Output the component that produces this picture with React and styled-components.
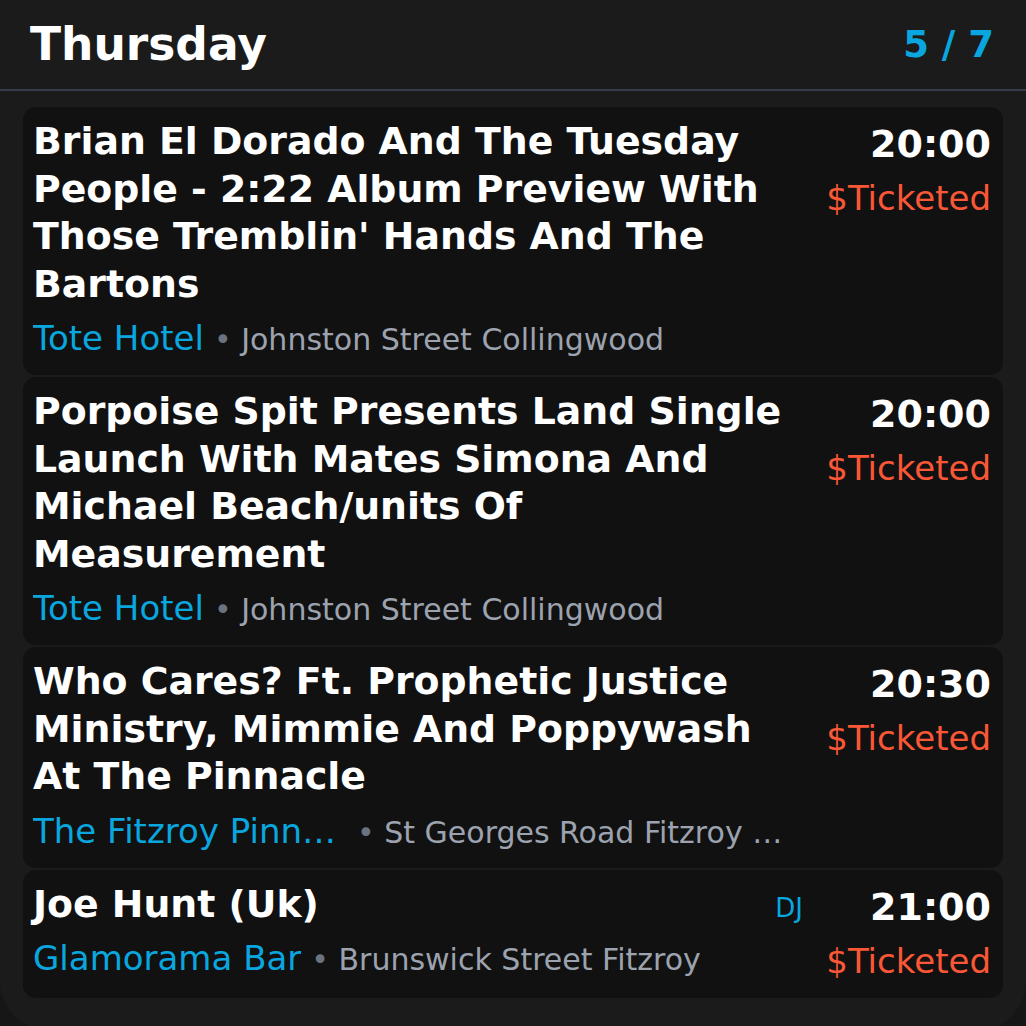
import React from "react"
import styled, { createGlobalStyle } from "styled-components"

const GlobalStyle = createGlobalStyle`
  html, body {
    margin: 0;
    padding: 0;
    background: #161616;
    overflow: hidden;
  }
  body {
    font-family: "DejaVu Sans", "Liberation Sans", sans-serif;
    color: #ffffff;
  }
`

const Panel = styled.div`
  background: #1b1b1b;
  height: 1030px;
  border-radius: 0 0 48px 48px;
`

const Header = styled.header`
  display: flex;
  align-items: center;
  justify-content: space-between;
  height: 89px;
  padding: 0 32px 0 30px;
  border-bottom: 2px solid #363c48;
`

const Day = styled.h1`
  margin: 0;
  font-size: 45.5px;
  font-weight: 700;
  color: #ffffff;
`

const Counter = styled.div`
  font-size: 37px;
  font-weight: 700;
  color: #0aa6df;
`

const List = styled.div`
  display: flex;
  flex-direction: column;
  gap: 2px;
  padding: 16px 23px;
`

const Card = styled.div`
  display: flex;
  gap: 14px;
  padding: 11px 12px 15px 10px;
  background: #111111;
  border-radius: 13px;
`

const Main = styled.div`
  flex: 1;
  min-width: 0;
`

const TitleRow = styled.div`
  display: flex;
  align-items: baseline;
  justify-content: space-between;
  gap: 16px;
`

const Title = styled.div`
  font-size: 37.8px;
  font-weight: 700;
  line-height: 47.5px;
  color: #ffffff;
`

const Tag = styled.span`
  font-size: 26px;
  line-height: 30px;
  color: #0aa6df;
  flex-shrink: 0;
`

const VenueLine = styled.div`
  display: flex;
  align-items: baseline;
  height: 44px;
  margin-top: 8px;
  line-height: 44px;
  white-space: nowrap;
`

const Venue = styled.span`
  max-width: 314px;
  overflow: hidden;
  text-overflow: ellipsis;
  font-size: 34px;
  color: #0aa6df;
  flex-shrink: 0;
`

const Address = styled.span`
  flex: 1;
  min-width: 0;
  margin-left: 10px;
  overflow: hidden;
  text-overflow: ellipsis;
  font-size: 30px;
  color: #9ca3af;
`

const Dot = styled.span`
  color: #6b7280;
`

const Side = styled.div`
  width: 174px;
  flex-shrink: 0;
  text-align: right;
`

const Time = styled.div`
  font-size: 38px;
  font-weight: 700;
  line-height: 52px;
  color: #ffffff;
`

const Price = styled.div`
  margin-top: 6px;
  font-size: 34px;
  line-height: 44px;
  color: #fa5737;
`

const events = [
  {
    title: "Brian El Dorado And The Tuesday People - 2:22 Album Preview With Those Tremblin' Hands And The Bartons",
    venue: "Tote Hotel",
    address: "Johnston Street Collingwood",
    time: "20:00",
  },
  {
    title: "Porpoise Spit Presents Land Single Launch With Mates Simona And Michael Beach/units Of Measurement",
    venue: "Tote Hotel",
    address: "Johnston Street Collingwood",
    time: "20:00",
  },
  {
    title: "Who Cares? Ft. Prophetic Justice Ministry, Mimmie And Poppywash At The Pinnacle",
    venue: "The Fitzroy Pinnacle",
    address: "St Georges Road Fitzroy North",
    time: "20:30",
  },
  {
    title: "Joe Hunt (Uk)",
    tag: "DJ",
    venue: "Glamorama Bar",
    address: "Brunswick Street Fitzroy",
    time: "21:00",
  },
]

const App = () => {
  return (
    <>
      <GlobalStyle />
      <Panel>
        <Header>
          <Day>Thursday</Day>
          <Counter>5 / 7</Counter>
        </Header>
        <List>
          {events.map((ev, i) => (
            <Card key={i}>
              <Main>
                <TitleRow>
                  <Title>{ev.title}</Title>
                  {ev.tag && <Tag>{ev.tag}</Tag>}
                </TitleRow>
                <VenueLine>
                  <Venue>{ev.venue}</Venue>
                  <Address>
                    <Dot>•</Dot> {ev.address}
                  </Address>
                </VenueLine>
              </Main>
              <Side>
                <Time>{ev.time}</Time>
                <Price>$Ticketed</Price>
              </Side>
            </Card>
          ))}
        </List>
      </Panel>
    </>
  )
}

export default App
